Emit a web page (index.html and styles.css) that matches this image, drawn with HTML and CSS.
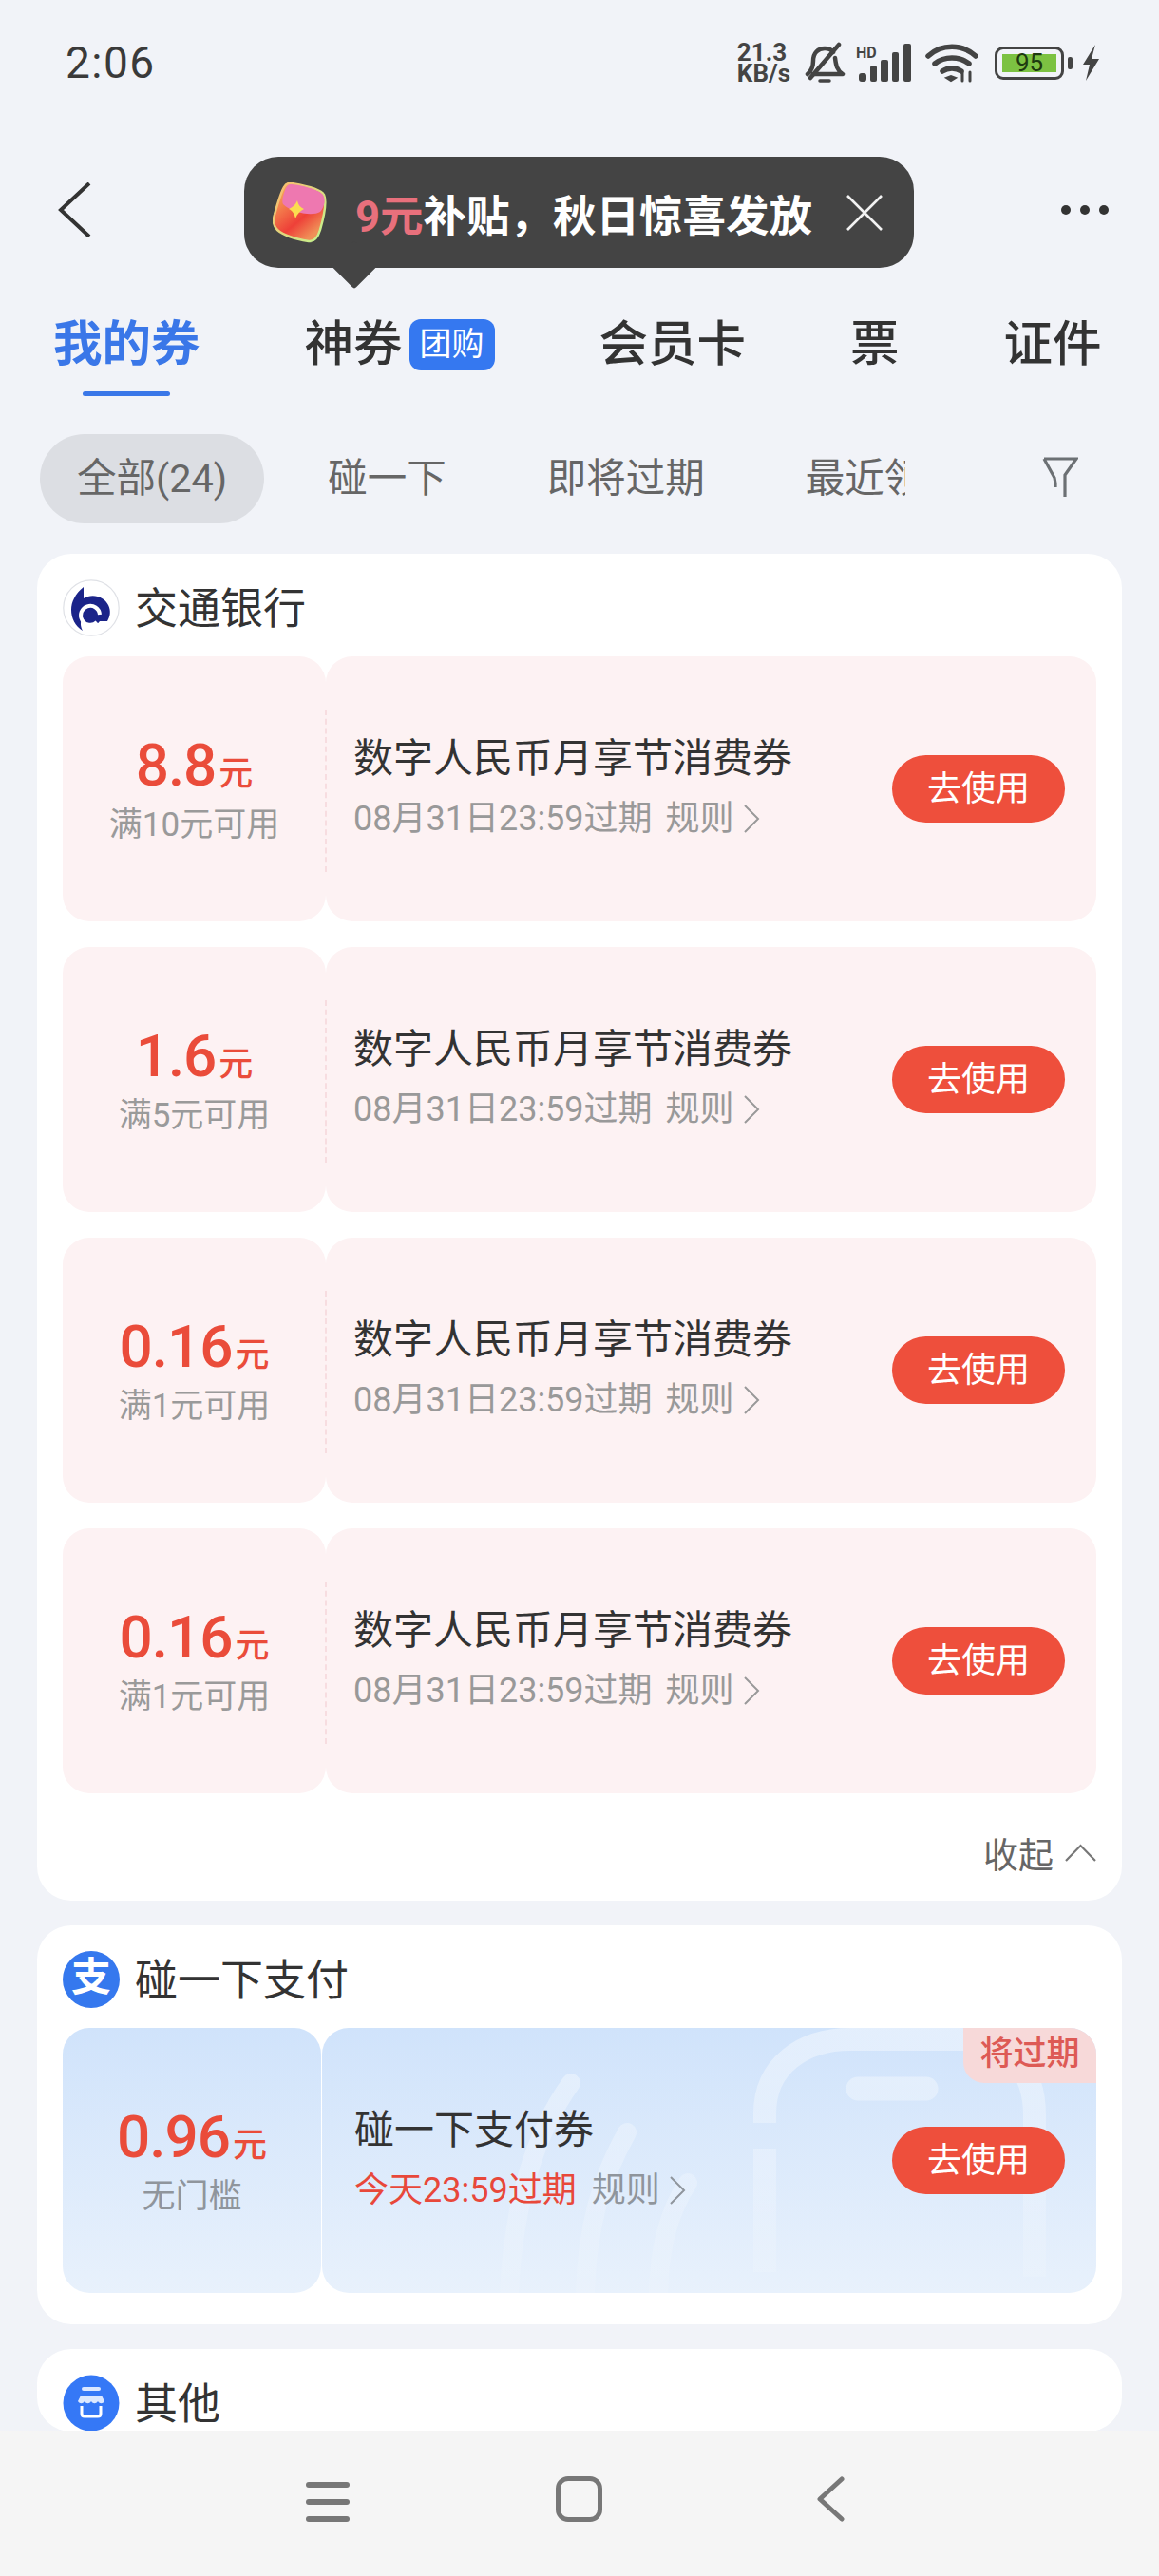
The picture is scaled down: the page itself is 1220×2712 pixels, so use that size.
FILE: index.html
```html
<!DOCTYPE html>
<html lang="zh-CN">
<head>
    <meta charset="UTF-8">
    <title>我的券</title>
    <link rel="stylesheet" href="styles.css">
</head>
<body>
<div class="page">
    <div class="status">
        <div class="time">2:06</div>
        <div class="status-icons">
            <div class="speed"><span>21.3</span><span>KB/s</span></div>
            <svg class="ic-bell" width="44" height="44" viewBox="0 0 44 44" fill="none" stroke="#444" stroke-width="4.500" stroke-linecap="round" stroke-linejoin="round">
                <path d="M4 34c5-4 6-8 6-14 0-8 5-13 12-13 4 0 7 1 9 4M33 17c1 8 2 13 8 17H10"/>
                <path d="M7 38L37 3"/>
                <path d="M17 41h10" stroke-width="3.500"/>
            </svg>
            <svg class="ic-signal" width="60" height="42" viewBox="0 0 60 42" fill="#444">
                <text x="0" y="16" font-family="Roboto" font-weight="700" font-size="16" fill="#444">HD</text>
                <rect x="3" y="32" width="8" height="9" rx="3"/>
                <rect x="15" y="24" width="7" height="17" rx="2"/>
                <rect x="26" y="18" width="8" height="23" rx="2"/>
                <rect x="38" y="10" width="7" height="31" rx="2"/>
                <rect x="50" y="1" width="8" height="40" rx="2"/>
            </svg>
            <svg class="ic-wifi" width="56" height="42" viewBox="0 0 56 42" fill="none" stroke="#444" stroke-width="5.500" stroke-linecap="round">
                <path d="M3 14c14-13 36-13 50 0"/>
                <path d="M10 22c10-8 26-8 36 0"/>
                <path d="M18 30c6-4 14-4 20 0"/>
                <path d="M22 37l5 3 5-3-5-2z" fill="#444" stroke-width="2"/>
                <path d="M39 31v9M47 31v9" stroke-width="3"/>
            </svg>
            <div class="battery">
                <div class="battery-body"><div class="battery-fill">95</div></div>
                <div class="battery-cap"></div>
            </div>
            <svg class="ic-bolt" width="20" height="38" viewBox="0 0 20 38" fill="#444">
                <path d="M15 0L2 21h7L5 38l14-23h-8z"/>
            </svg>
        </div>
    </div>

    <div class="appbar">
        <svg width="36" height="58" viewBox="0 0 36 58" fill="none" stroke="#333" stroke-width="4">
            <path d="M34 1L4 29l30 28"/>
        </svg>
        <div class="dots"><i></i><i></i><i></i></div>
        <div class="tip">
            <svg class="tip-pack" width="58" height="64" viewBox="0 0 58 64">
                <defs>
                    <linearGradient id="packBody" x1="0" y1="0.2" x2="0.6" y2="1">
                        <stop offset="0" stop-color="#f7a85a"/>
                        <stop offset="0.65" stop-color="#ee4038"/>
                        <stop offset="1" stop-color="#f09058"/>
                    </linearGradient>
                    <linearGradient id="packEdge" x1="0" y1="0.3" x2="0.8" y2="1">
                        <stop offset="0" stop-color="#f4c070"/>
                        <stop offset="1" stop-color="#c8f08c"/>
                    </linearGradient>
                </defs>
                <path d="M20 1Q50 6 54 13 58 22 50 50 46 63 38 62 14 58 5 50-1 44 2 34 8 12 12 5 15 0 20 1z" fill="url(#packBody)" stroke="url(#packEdge)" stroke-width="2.500"/>
                <path d="M20 2C30 3 48 7 53 13 57 20 53 28 50 31 42 36 20 32 11 23 9 20 12 10 14 6 16 1 20 2 20 2z" fill="#ee78b0"/>
                <path d="M26 19C27 24 29 26 33 28 29 30 26 33 24 38 23 33 21 30 17 28 21 26 24 24 26 19z" fill="#fbdc50"/>
            </svg>
            <div class="tip-text"><em>9元</em>补贴，秋日惊喜发放</div>
            <svg class="tip-close" width="40" height="38" viewBox="0 0 40 38" fill="none" stroke="#f2f2f2" stroke-width="2.600">
                <path d="M2 1l36 36M38 1L2 37"/>
            </svg>
        </div>
    </div>

    <div class="tabs">
        <div class="tab tab-on">我的券</div>
        <div class="tab">神券<span class="tab-badge">团购</span></div>
        <div class="tab">会员卡</div>
        <div class="tab">票</div>
        <div class="tab">证件</div>
    </div>

    <div class="filters">
        <div class="filter-list">
            <div class="filter filter-on">全部(24)</div>
            <div class="filter">碰一下</div>
            <div class="filter">即将过期</div>
            <div class="filter">最近领取</div>
        </div>
        <svg class="filter-icon" width="38" height="43" viewBox="0 0 38 43" fill="none" stroke="#6c7074" stroke-width="3.200">
            <path d="M2 2h34L24 19v23M14 32v-4l-1-6L2 2"/>
        </svg>
    </div>

    <div class="scroll">
        <div class="card">
            <div class="card-head">
                <svg class="logo" width="60" height="60" viewBox="0 0 60 60">
                    <circle cx="30" cy="30" r="29.200" fill="#fff" stroke="#dfe1e6" stroke-width="1.200"/>
                    <path d="M22 8C13 15 9 24 9 32c0 9 4 17 12 22-3-6-2-9-1-13 2 5 6 7 10 7 4 0 7-1 9-4h8c3-5 4-11 1-17-4-9-17-13-26-7z" fill="#1b2489"/>
                    <path d="M39 37a10 10 0 1 0-3 8" fill="none" stroke="#fff" stroke-width="4"/>
                    <circle cx="29" cy="38" r="5.500" fill="#1b2489"/>
                </svg>
                <div class="card-name">交通银行</div>
            </div>
            <div class="coupon-list">
                <div class="coupon">
                    <div class="coupon-left">
                        <div class="amount">8.8<small>元</small></div>
                        <div class="cond">满10元可用</div>
                    </div>
                    <div class="coupon-main">
                        <div class="info">
                            <div class="info-title">数字人民币月享节消费券</div>
                            <div class="info-meta">08月31日23:59过期<span class="rule">规则<svg width="17" height="30" viewBox="0 0 17 30" fill="none" stroke="#999" stroke-width="2"><path d="M1 1l14 14L1 29"/></svg></span></div>
                        </div>
                        <div class="use-btn">去使用</div>
                    </div>
                </div>
                <div class="coupon">
                    <div class="coupon-left">
                        <div class="amount">1.6<small>元</small></div>
                        <div class="cond">满5元可用</div>
                    </div>
                    <div class="coupon-main">
                        <div class="info">
                            <div class="info-title">数字人民币月享节消费券</div>
                            <div class="info-meta">08月31日23:59过期<span class="rule">规则<svg width="17" height="30" viewBox="0 0 17 30" fill="none" stroke="#999" stroke-width="2"><path d="M1 1l14 14L1 29"/></svg></span></div>
                        </div>
                        <div class="use-btn">去使用</div>
                    </div>
                </div>
                <div class="coupon">
                    <div class="coupon-left">
                        <div class="amount">0.16<small>元</small></div>
                        <div class="cond">满1元可用</div>
                    </div>
                    <div class="coupon-main">
                        <div class="info">
                            <div class="info-title">数字人民币月享节消费券</div>
                            <div class="info-meta">08月31日23:59过期<span class="rule">规则<svg width="17" height="30" viewBox="0 0 17 30" fill="none" stroke="#999" stroke-width="2"><path d="M1 1l14 14L1 29"/></svg></span></div>
                        </div>
                        <div class="use-btn">去使用</div>
                    </div>
                </div>
                <div class="coupon">
                    <div class="coupon-left">
                        <div class="amount">0.16<small>元</small></div>
                        <div class="cond">满1元可用</div>
                    </div>
                    <div class="coupon-main">
                        <div class="info">
                            <div class="info-title">数字人民币月享节消费券</div>
                            <div class="info-meta">08月31日23:59过期<span class="rule">规则<svg width="17" height="30" viewBox="0 0 17 30" fill="none" stroke="#999" stroke-width="2"><path d="M1 1l14 14L1 29"/></svg></span></div>
                        </div>
                        <div class="use-btn">去使用</div>
                    </div>
                </div>
            </div>
            <div class="collapse">收起<svg width="33" height="19" viewBox="0 0 33 19" fill="none" stroke="#777" stroke-width="2.200"><path d="M1 18L16.500 2 32 18"/></svg></div>
        </div>

        <div class="card card-pay">
            <div class="card-head">
                <div class="logo logo-ali">支</div>
                <div class="card-name">碰一下支付</div>
            </div>
            <div class="coupon coupon-blue">
                <div class="coupon-left">
                    <div class="amount">0.96<small>元</small></div>
                    <div class="cond">无门槛</div>
                </div>
                <div class="coupon-main">
                    <!-- 背景的手机和弧线，只是装饰 -->
                    <svg class="decor" width="814" height="279" viewBox="0 0 814 279" fill="none" stroke="url(#decorFade)" stroke-linecap="round">
                        <defs>
                            <linearGradient id="decorFade" gradientUnits="userSpaceOnUse" x1="0" y1="0" x2="0" y2="279">
                                <stop offset="0" stop-color="#fff" stop-opacity="0.42"/>
                                <stop offset="1" stop-color="#fff" stop-opacity="0.08"/>
                            </linearGradient>
                        </defs>
                        <path d="M466 100v-10c0-50 40-78 90-78h115c50 0 79 30 79 80v170" stroke-width="24" stroke-linecap="butt"/>
                        <path d="M466 127v130" stroke-width="24" stroke-linecap="butt"/>
                        <path d="M564 64h72" stroke-width="25"/>
                        <path d="M262 58c-36 50-60 120-65 221" stroke-width="20"/>
                        <path d="M321 110c-28 50-42 100-44 169" stroke-width="20"/>
                        <path d="M385 163c-20 30-30 70-31 116" stroke-width="20"/>
                    </svg>
                    <div class="info">
                        <div class="info-title">碰一下支付券</div>
                        <div class="info-meta"><span class="soon">今天23:59过期</span><span class="rule">规则<svg width="17" height="30" viewBox="0 0 17 30" fill="none" stroke="#8f959c" stroke-width="2"><path d="M1 1l14 14L1 29"/></svg></span></div>
                    </div>
                    <div class="use-btn">去使用</div>
                    <div class="expire-tag">将过期</div>
                </div>
            </div>
        </div>

        <div class="card">
            <div class="card-head">
                <svg class="logo" width="60" height="60" viewBox="0 0 60 60">
                    <circle cx="30" cy="30" r="29.500" fill="#3578f6"/>
                    <path d="M22 15h16" stroke="#dbe8ff" stroke-width="4" stroke-linecap="round"/>
                    <path d="M19 22h22l3 6c-2 3-5 3-7 0-2 3-5 3-7 0-2 3-5 3-7 0-2 3-5 3-7 0z" fill="#dbe8ff"/>
                    <path d="M20 33v8c0 2 1 3 3 3h14c2 0 3-1 3-3v-8" fill="none" stroke="#fff" stroke-width="3"/>
                </svg>
                <div class="card-name">其他</div>
            </div>
        </div>
    </div>

    <div class="navbar">
        <div class="nav-menu"><i></i><i></i><i></i></div>
        <div class="nav-home"></div>
        <svg width="30" height="48" viewBox="0 0 30 48" fill="none" stroke="#777" stroke-width="5" stroke-linecap="round" stroke-linejoin="round">
            <path d="M27 3L4 24l23 21"/>
        </svg>
    </div>
</div>
</body>
</html>
```

FILE: styles.css
```css
* {
    padding: 0;
    margin: 0;
    box-sizing: border-box;
}

body {
    background-color: #f1f3f8;
    font-family: Roboto, "Noto Sans CJK SC", sans-serif;
    color: #333;
}

.page {
    width: 1220px;
    height: 2712px;
    display: flex;
    flex-direction: column;
    overflow: hidden;
}

/* 状态栏 */
.status {
    height: 132px;
    padding: 0 60px 0 69px;
    display: flex;
    align-items: center;
    justify-content: space-between;
    flex-shrink: 0;
}

.time {
    font-size: 46px;
    letter-spacing: 1.500px;
    color: #3a3a3a;
}

.status-icons {
    display: flex;
    align-items: center;
}

.speed {
    display: flex;
    flex-direction: column;
    font-size: 26px;
    font-weight: 700;
    line-height: 22px;
    color: #444;
}

.ic-bell {
    margin-left: 14px;
}

.ic-signal {
    margin-left: 11px;
}

.ic-wifi {
    margin-left: 13px;
}

.battery {
    display: flex;
    align-items: center;
    margin-left: 17px;
}

.battery-body {
    width: 73px;
    height: 35px;
    padding: 5px;
    border: 3px solid #444;
    border-radius: 9px;
}

.battery-fill {
    height: 100%;
    background-color: #7cc242;
    font-size: 26px;
    line-height: 19px;
    text-align: center;
    color: #1e3a10;
}

.battery-cap {
    width: 5px;
    height: 13px;
    margin-left: 4px;
    border-radius: 2px;
    background-color: #444;
}

.ic-bolt {
    margin-left: 9px;
    margin-right: 2px;
}

/* 标题栏 */
.appbar {
    height: 178px;
    padding: 0 53px 0 60px;
    display: flex;
    align-items: center;
    justify-content: space-between;
    position: relative;
    flex-shrink: 0;
}

.dots {
    display: flex;
    gap: 10px;
}

.dots i {
    width: 10px;
    height: 10px;
    border-radius: 50%;
    background-color: #333;
}

.tip {
    position: absolute;
    left: 257px;
    top: 33px;
    width: 705px;
    height: 117px;
    padding: 0 32px 0 30px;
    display: flex;
    align-items: center;
    border-radius: 36px;
    background-color: #444;
}

.tip::after {
    content: "";
    position: absolute;
    left: 98px;
    bottom: -15px;
    width: 36px;
    height: 36px;
    transform: rotate(45deg);
    border-radius: 3px;
    background-color: #444;
}

.tip-text {
    margin-left: 29px;
    font-size: 45.500px;
    font-weight: 700;
    white-space: nowrap;
    color: #fff;
}

.tip-text em {
    font-style: normal;
    color: #e8707c;
}

.tip-close {
    margin-left: auto;
}

/* 顶部标签 */
.tabs {
    height: 102px;
    padding: 18px 0 0 56px;
    display: flex;
    gap: 110px;
    align-items: flex-start;
    flex-shrink: 0;
}

.tab {
    display: flex;
    flex-direction: column;
    align-items: center;
    font-size: 51.500px;
    font-weight: 500;
    line-height: 70px;
    white-space: nowrap;
}

.tab:nth-child(2) {
    flex-direction: row;
}

.tab-on {
    color: #3a77e8;
    font-weight: 700;
}

.tab-on::after {
    content: "";
    width: 92px;
    height: 5px;
    margin-top: 14px;
    border-radius: 3px;
    background-color: #3a77e8;
}

.tab-badge {
    width: 90px;
    height: 54px;
    margin-left: 7px;
    border-radius: 12px;
    background-color: #3578f0;
    font-size: 34px;
    font-weight: 400;
    line-height: 52px;
    text-align: center;
    color: #fff;
}

/* 筛选 */
.filters {
    margin-top: 45px;
    height: 94px;
    padding-left: 42px;
    display: flex;
    align-items: center;
    flex-shrink: 0;
}

.filter-list {
    width: 911px;
    display: flex;
    gap: 28px;
    overflow: hidden;
}

.filter {
    height: 94px;
    padding: 0 39px;
    border-radius: 47px;
    font-size: 41.500px;
    line-height: 94px;
    white-space: nowrap;
    color: #666;
}

.filter-on {
    background-color: #dcdee3;
}

.filter-icon {
    margin-left: 144px;
    margin-top: -4px;
}

/* 券列表 */
.scroll {
    flex: 1;
    min-height: 0;
    padding: 32px 39px 0;
    overflow: hidden;
}

.card {
    padding: 27px 27px 0;
    margin-bottom: 26px;
    border-radius: 36px;
    background-color: #fff;
}

.card-pay {
    padding-bottom: 33px;
}

.card-head {
    height: 60px;
    display: flex;
    align-items: center;
    gap: 16px;
}

.logo {
    width: 60px;
    height: 60px;
    flex-shrink: 0;
}

.logo-ali {
    border-radius: 50%;
    background-color: #3578ee;
    font-size: 42px;
    font-weight: 700;
    line-height: 56px;
    text-align: center;
    color: #fff;
}

.card-name {
    padding-top: 4px;
    font-size: 45px;
    line-height: 60px;
    color: #333;
}

.coupon-list {
    display: flex;
    flex-direction: column;
    gap: 27px;
}

.coupon {
    margin-top: 21px;
    height: 279px;
    display: flex;
}

.coupon-list .coupon + .coupon {
    margin-top: 0;
}

.coupon-left {
    width: 277px;
    display: flex;
    flex-direction: column;
    align-items: center;
    justify-content: center;
    padding-top: 5px;
    border-radius: 28px;
    background-color: #fdf2f3;
}

.amount {
    font-size: 62px;
    font-weight: 500;
    letter-spacing: -1px;
    line-height: 70px;
    color: #ea4c3a;
}

.amount small {
    font-size: 36px;
    font-weight: 500;
    letter-spacing: 0;
    margin-left: 3px;
}

.cond {
    margin-top: -7px;
    font-size: 35px;
    line-height: 52px;
    color: #9a9a9a;
}

.coupon-main {
    flex: 1;
    padding: 0 33px 0 29px;
    display: flex;
    align-items: center;
    justify-content: space-between;
    position: relative;
    border-radius: 28px;
    background-color: #fdf2f3;
}

/* 左右两块之间的虚线 */
.coupon-main::before {
    content: "";
    position: absolute;
    left: -1px;
    top: 56px;
    height: 171px;
    border-left: 2px dashed #f7dde0;
}

.info {
    position: relative;
    margin-bottom: 6px;
}

.info-title {
    font-size: 42px;
    line-height: 60px;
    color: #333;
}

.info-meta {
    margin-top: 8px;
    display: flex;
    align-items: center;
    font-size: 36px;
    line-height: 50px;
    color: #999;
}

.rule {
    display: flex;
    align-items: center;
    margin-left: 14px;
}

.rule svg {
    margin-left: 10px;
}

.use-btn {
    position: relative;
    width: 182px;
    height: 71px;
    border-radius: 36px;
    background-color: #ee4f3c;
    font-size: 36px;
    line-height: 72px;
    text-align: center;
    color: #fff;
}

.collapse {
    height: 113px;
    padding-top: 12px;
    display: flex;
    align-items: center;
    justify-content: flex-end;
    gap: 12px;
    font-size: 37px;
    color: #666;
}

/* 蓝色的碰一下券 */
.coupon-blue .coupon-left {
    width: 272px;
    background: linear-gradient(#d0e3fb, #e8f1fc);
}

.coupon-blue .coupon-main {
    margin-left: 1px;
    padding-left: 34px;
    overflow: hidden;
    background: linear-gradient(#d0e3fb, #e8f1fc);
}

.coupon-blue .coupon-main::before {
    display: none;
}

.decor {
    position: absolute;
    left: 0;
    top: 0;
}

.soon {
    color: #e8483a;
}

.coupon-blue .rule {
    color: #8f959c;
    margin-left: 16px;
}

.coupon-blue .cond {
    color: #8f959c;
}

.expire-tag {
    position: absolute;
    right: 0;
    top: 0;
    width: 140px;
    height: 58px;
    border-bottom-left-radius: 22px;
    background-color: #f7d9d9;
    font-size: 35px;
    font-weight: 500;
    line-height: 56px;
    text-align: center;
    color: #dd5a55;
}

/* 底部导航 */
.navbar {
    height: 153px;
    padding: 48px 10px 0 0;
    display: flex;
    align-items: flex-start;
    justify-content: center;
    background-color: #f5f5f5;
    flex-shrink: 0;
}

.nav-menu {
    width: 46px;
    height: 42px;
    margin-top: 6px;
    display: flex;
    flex-direction: column;
    justify-content: space-between;
    margin-right: 217px;
}

.nav-menu i {
    height: 6px;
    border-radius: 3px;
    background-color: #777;
}

.nav-home {
    width: 49px;
    height: 48px;
    border: 5px solid #777;
    border-radius: 13px;
    margin-right: 225px;
}
```
